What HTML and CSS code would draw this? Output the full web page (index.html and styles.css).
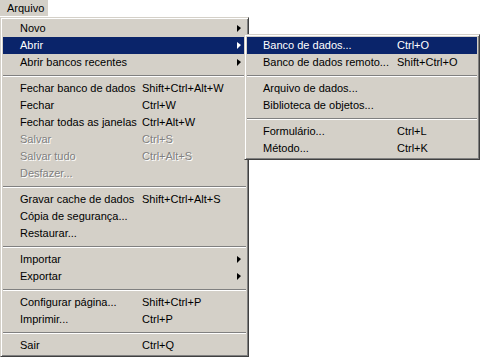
FILE: index.html
```html
<!DOCTYPE html>
<html lang="pt">
<head>
    <meta charset="UTF-8">
    <title>Arquivo</title>
    <link rel="stylesheet" href="styles.css">
</head>
<body>
    <div class="menubar">
        <div class="menubar-item open">Arquivo</div>
    </div>

    <div class="menu-area">
        <div class="menu main-menu">
            <div class="item"><span>Novo</span><span></span><span class="arrow"></span></div>
            <div class="item active"><span>Abrir</span><span></span><span class="arrow"></span></div>
            <div class="item"><span>Abrir bancos recentes</span><span></span><span class="arrow"></span></div>
            <div class="sep"></div>
            <div class="item"><span>Fechar banco de dados</span><span>Shift+Ctrl+Alt+W</span></div>
            <div class="item"><span>Fechar</span><span>Ctrl+W</span></div>
            <div class="item"><span>Fechar todas as janelas</span><span>Ctrl+Alt+W</span></div>
            <div class="item disabled"><span>Salvar</span><span>Ctrl+S</span></div>
            <div class="item disabled"><span>Salvar tudo</span><span>Ctrl+Alt+S</span></div>
            <div class="item disabled"><span>Desfazer...</span><span></span></div>
            <div class="sep"></div>
            <div class="item"><span>Gravar cache de dados</span><span>Shift+Ctrl+Alt+S</span></div>
            <div class="item"><span>Cópia de segurança...</span><span></span></div>
            <div class="item"><span>Restaurar...</span><span></span></div>
            <div class="sep"></div>
            <div class="item"><span>Importar</span><span></span><span class="arrow"></span></div>
            <div class="item"><span>Exportar</span><span></span><span class="arrow"></span></div>
            <div class="sep"></div>
            <div class="item"><span>Configurar página...</span><span>Shift+Ctrl+P</span></div>
            <div class="item"><span>Imprimir...</span><span>Ctrl+P</span></div>
            <div class="sep"></div>
            <div class="item"><span>Sair</span><span>Ctrl+Q</span></div>
        </div>

        <!-- submenu de "Abrir" -->
        <div class="menu sub-menu">
            <div class="item active"><span>Banco de dados...</span><span>Ctrl+O</span></div>
            <div class="item"><span>Banco de dados remoto...</span><span>Shift+Ctrl+O</span></div>
            <div class="sep"></div>
            <div class="item"><span>Arquivo de dados...</span><span></span></div>
            <div class="item"><span>Biblioteca de objetos...</span><span></span></div>
            <div class="sep"></div>
            <div class="item"><span>Formulário...</span><span>Ctrl+L</span></div>
            <div class="item"><span>Método...</span><span>Ctrl+K</span></div>
        </div>
    </div>
</body>
</html>
```

FILE: styles.css
```css
body {
    margin: 0;
    width: 480px;
    height: 358px;
    overflow: hidden;
    background: #ffffff;
    font-family: 'Liberation Sans', Arial, sans-serif;
    font-size: 11px;
    color: #000000;
}

.menubar {
    display: flex;
    height: 17px;
}

.menubar-item {
    width: 41px;
    height: 16px;
    padding-left: 7px;
    line-height: 17px;
    background: #d4d0c8;
    border-right: 1px solid #ffffff;
    border-bottom: 1px solid #ffffff;
}

.menu-area {
    position: relative;
}

.menu {
    box-sizing: border-box;
    background: #d4d0c8;
    border-top: 1px solid #d4d0c8;
    border-left: 1px solid #d4d0c8;
    border-right: 1px solid #404040;
    border-bottom: 1px solid #404040;
    box-shadow: inset 1px 1px 0 #ffffff, inset -1px -1px 0 #808080;
    padding: 2px;
}

.main-menu {
    width: 249px;
}

.sub-menu {
    position: absolute;
    left: 244px;
    top: 17px;
    width: 236px;
}

.item {
    display: grid;
    align-items: center;
    height: 17px;
    line-height: 17px;
    white-space: nowrap;
}

.main-menu .item {
    grid-template-columns: 122px 1fr auto;
    padding: 0 5px 0 17px;
}

.sub-menu .item {
    grid-template-columns: 134px 1fr;
    padding: 0 5px 0 16px;
}

.item.active {
    background: #0a246a;
    color: #ffffff;
}

.item.disabled {
    color: #808080;
    text-shadow: 1px 1px 0 #ffffff;
}

.arrow {
    width: 0;
    height: 0;
    border-top: 3px solid transparent;
    border-bottom: 4px solid transparent;
    border-left: 4px solid #000000;
}

.item.active .arrow {
    border-left-color: #ffffff;
}

.sep {
    height: 9px;
    box-sizing: border-box;
    padding-top: 4px;
}

.sep::before {
    content: "";
    display: block;
    height: 1px;
    background: #808080;
    border-bottom: 1px solid #ffffff;
}
```
